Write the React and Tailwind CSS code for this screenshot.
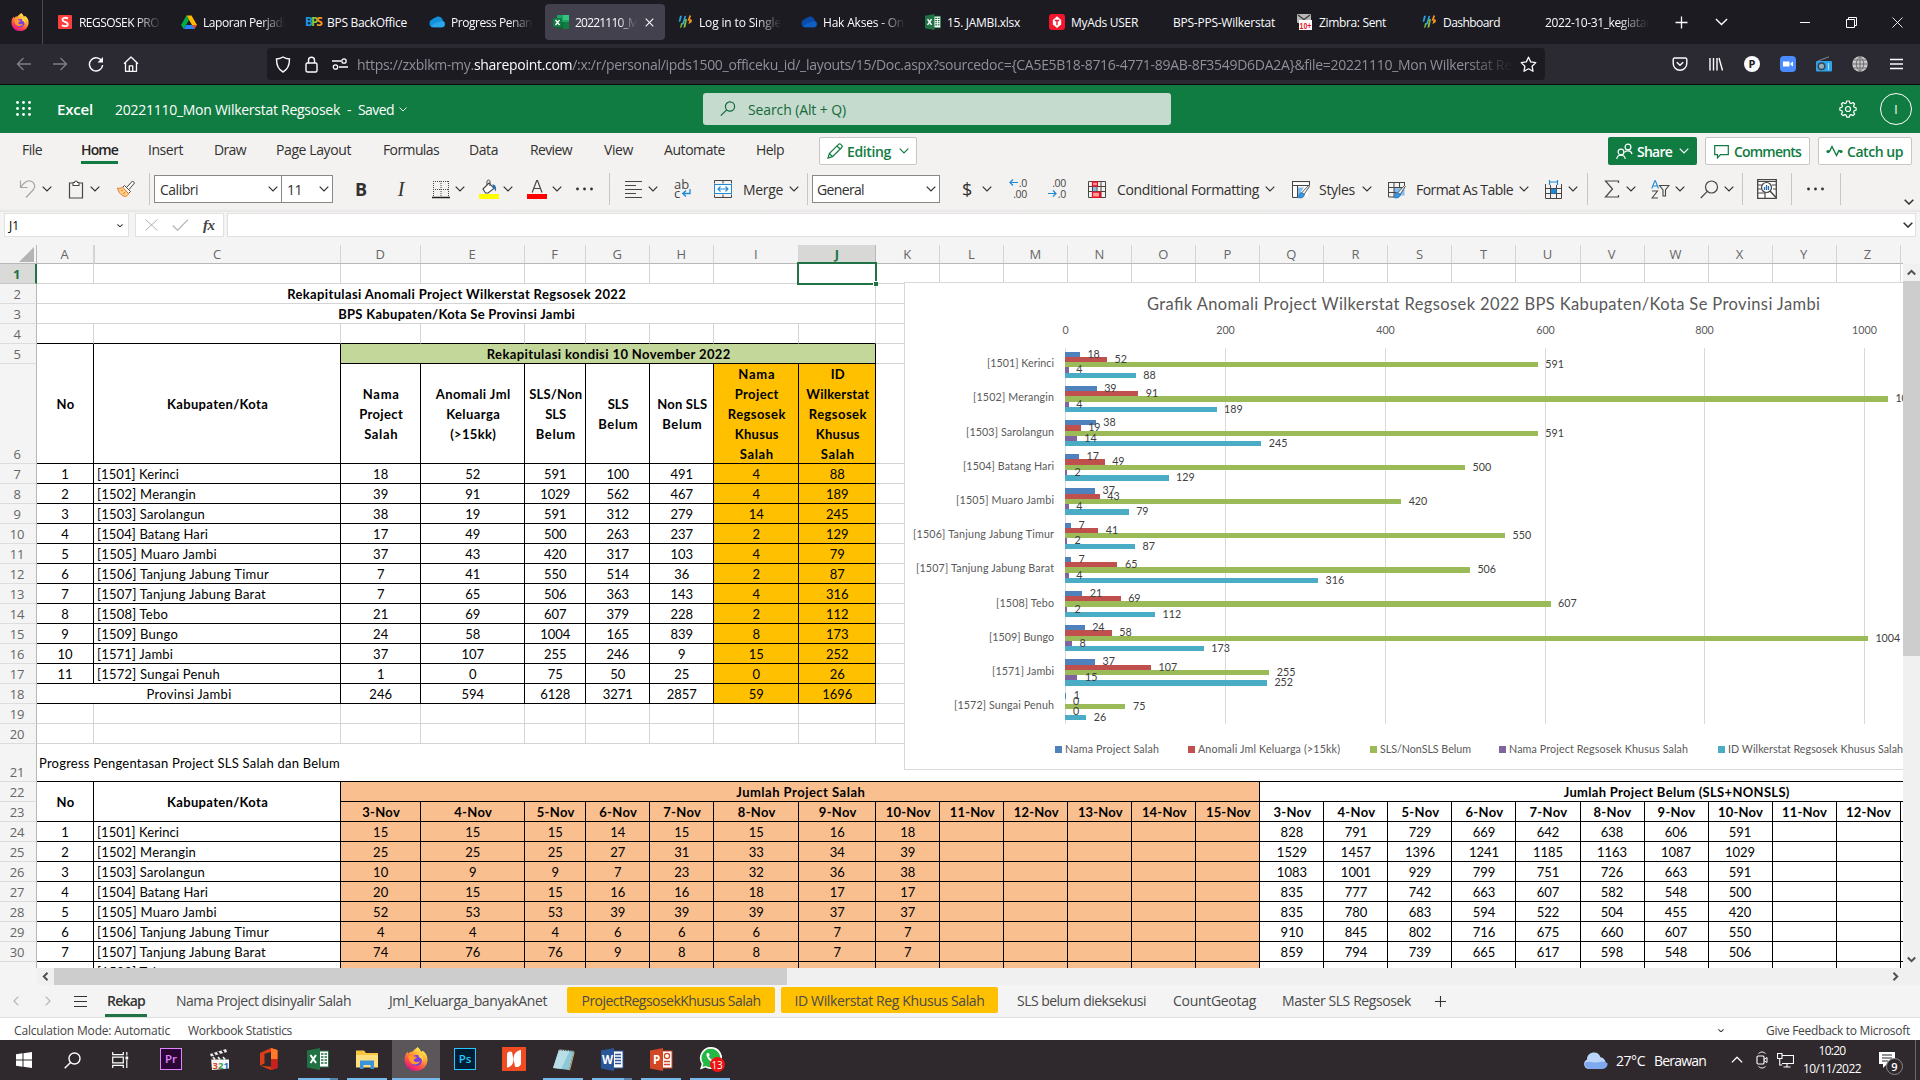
import React, { useLayoutEffect, useRef } from "react";

/* Single-line text whose tracking is adjusted so that it spans exactly w pixels. */
function Fit({ w, className = "", children }) {
  const ref = useRef(null);
  useLayoutEffect(() => {
    const el = ref.current;
    el.style.letterSpacing = "0px";
    const natural = el.getBoundingClientRect().width;
    el.style.letterSpacing = `${(w - natural) / el.textContent.length}px`;
  }, [w, children]);
  return (
    <span ref={ref} className={`inline-block shrink-0 whitespace-pre ${className}`}>
      {children}
    </span>
  );
}

function Svg({ w = 16, h = w, vb, className = "", children }) {
  return (
    <svg width={w} height={h} viewBox={vb || `0 0 ${w} ${h}`} fill="none" className={`block shrink-0 ${className}`}>
      {children}
    </svg>
  );
}

const Chevron = ({ className = "", w = 10, sw = 1.2 }) => (
  <Svg w={w} h={w * 0.6} vb="0 0 10 6" className={className}>
    <path d="M.7.7 5 5 9.300.7" stroke="currentColor" strokeWidth={sw} />
  </Svg>
);

/* ------------------------------------------------------------ app icons */

const FirefoxIcon = ({ s = 18 }) => (
  <Svg w={s} vb="0 0 24 24">
    <defs>
      <linearGradient id={`ff${s}`} x1="18" y1="2" x2="6" y2="22" gradientUnits="userSpaceOnUse">
        <stop offset="0" stopColor="#fff44f" />
        <stop offset=".35" stopColor="#ffa436" />
        <stop offset=".7" stopColor="#ff4f45" />
        <stop offset="1" stopColor="#e31587" />
      </linearGradient>
    </defs>
    <path d="M13.500 0c2 1.500 3 3 3.400 4.500 1 .2 1.400-.2 1.700-.8C22 6 23.500 9 23.500 12.500 23.500 19 18.500 24 12 24S.5 19 .5 12.500C.5 9 2 6.500 3.500 4.500c0 1 .3 1.500.8 2C5.500 5 7 4.500 8.500 4.800 10 2.500 12 1.800 13.500 0z" fill={`url(#ff${s})`} />
    <circle cx="12.300" cy="13.500" r="5.600" fill="#7a3fe0" />
    <path d="M4.500 9c2-1.500 4-1 5.500.5 1.600.1 2.600.3 3 1.200-1.200.9-2.800 1-3.300 2.500.8 2 3.800 2.300 6.300 1-1 3-6.500 5-9.500 1C5 13.500 4 11.500 4.500 9z" fill="#ff9a2e" />
    <path d="M14 6c4 1 6 4.500 5 9-1-3-2.500-4.500-4.500-5 1-1.500.8-2.800-.5-4z" fill="#ffd43e" />
  </Svg>
);

const RedSIcon = () => (
  <Svg>
    <rect x="1" y="1" width="14" height="14" rx="1" fill="#ff3d3d" />
    <path d="M11 4.500C9 3.300 5.500 3.400 5.500 5.700c0 2.600 5.300 1.700 5.300 4.500 0 2.400-3.800 2.500-6 1.100" stroke="#fff" strokeWidth="1.800" />
  </Svg>
);

const DriveIcon = () => (
  <Svg>
    <path d="M5.500 1.500h5L16 11h-5z" fill="#ffba00" />
    <path d="M5.500 1.500 8 6 2.700 15 0 11z" fill="#00ac47" />
    <path d="M5.300 11H16l-2.700 4H2.700z" fill="#2684fc" />
    <path d="M11 11h5l-2.700 4z" fill="#ea4335" />
  </Svg>
);

const BpsTextIcon = () => (
  <span className="flex w-[16px] shrink-0 font-['Open_Sans'] text-[12px] font-bold leading-4 tracking-[-2.200px]">
    <span className="text-[#1c9ae0]">B</span>
    <span className="text-[#8cc63f]">P</span>
    <span className="text-[#f39a1e]">S</span>
  </span>
);

const CloudIcon = ({ a = "#1490df", b = "#28a8ea" }) => (
  <Svg>
    <path d="M6.500 3.500A4.600 4.600 0 0 1 14 7a3.200 3.200 0 0 1-.6 6.200H4A3.900 3.900 0 0 1 3.200 5.600 4.500 4.500 0 0 1 6.500 3.500z" fill={a} />
    <path d="M5.500 9.500 13 7a3.200 3.200 0 0 1 .4 6.200H4a3.500 3.500 0 0 1-2-.8z" fill={b} />
  </Svg>
);

const ExcelNewIcon = () => (
  <Svg>
    <rect x="4" y="1" width="12" height="14" rx="1" fill="#21a366" />
    <path d="M10 1h6v5h-6z" fill="#33c481" />
    <path d="M4 8h6v7H4z" fill="#185c37" />
    <path d="M10 8h6v7h-6z" fill="#107c41" />
    <rect y="4" width="9" height="9" rx="1" fill="#107c41" />
    <path d="m2.500 6 4 5m0-5-4 5" stroke="#fff" strokeWidth="1.300" />
  </Svg>
);

const OldExcel = ({ s = 16 }) => (
  <Svg w={s} vb="0 0 22 22">
    <rect x="12" y="3" width="9.500" height="16" fill="#fff" stroke="#207245" strokeWidth="1" />
    <path d="M14 6h2.500M14 9h2.500M14 12h2.500M14 15h2.500M17.500 6H20M17.500 9H20M17.500 12H20M17.500 15H20" stroke="#207245" strokeWidth="1.600" />
    <path d="M0 2.500 13 0v22L0 19.500z" fill="#207245" />
    <path d="m3.500 7 5.500 8M9 7l-5.500 8" stroke="#fff" strokeWidth="2" />
  </Svg>
);

const BpsLogo = () => (
  <Svg>
    <path d="M3 2 1.500 8l2-.8L5 1.500z" fill="#2aa4e0" />
    <path d="m7.500 2-2.800 9 2-.7 2.500-8.500z" fill="#2aa4e0" />
    <path d="m8 5-1.600 9 2.200-1L10 5z" fill="#7ab648" />
    <path d="m12.500 1-2 6 2-.6L14 2z" fill="#f7941d" />
    <path d="M13.500 5c2 .5 2 3 0 4l-2 1 1-4z" fill="#f7941d" />
    <path d="m4 9-1 5 1.600-.8.900-4z" fill="#7ab648" />
  </Svg>
);

const MyAdsIcon = () => (
  <Svg>
    <rect width="16" height="16" rx="3" fill="#f5142d" />
    <path d="M8 2.200 12.200 6v4.500L8 14l-4.200-3.500V6z" fill="#fff" />
    <path d="M5.800 6.500h4.400M8 6.500v4.700" stroke="#f5142d" strokeWidth="1.400" />
  </Svg>
);

const ZimbraIcon = () => (
  <Svg>
    <rect width="14" height="9" rx="1" fill="#b7b7b7" />
    <path d="m1 1 6 4.500L13 1" stroke="#444" strokeWidth="1.400" />
    <rect x="2" y="6" width="13" height="10" fill="#fff" />
    <text x="2.500" y="14.500" fontSize="9.500" fontWeight="700" fill="#e01b1b" fontFamily="Liberation Sans, sans-serif" textLength="12" lengthAdjust="spacingAndGlyphs">10+</text>
  </Svg>
);

/* ------------------------------------------------------------ browser */

const TABS = [
  { icon: <RedSIcon />, text: "REGSOSEK PRO", w: 80, fade: true },
  { icon: <DriveIcon />, text: "Laporan Perjadi", w: 82, fade: true },
  { icon: <BpsTextIcon />, text: "BPS BackOffice", w: 80 },
  { icon: <CloudIcon />, text: "Progress Penan", w: 81, fade: true },
  { icon: <ExcelNewIcon />, text: "20221110_M", w: 63, active: true },
  { icon: <BpsLogo />, text: "Log in to Single", w: 82, fade: true },
  { icon: <CloudIcon a="#0a4ba8" b="#0f5fc4" />, text: "Hak Akses - On", w: 81, fade: true },
  { icon: <OldExcel />, text: "15. JAMBI.xlsx", w: 73 },
  { icon: <MyAdsIcon />, text: "MyAds USER", w: 67 },
  { text: "BPS-PPS-Wilkerstat", w: 102 },
  { icon: <ZimbraIcon />, text: "Zimbra: Sent", w: 67 },
  { icon: <BpsLogo />, text: "Dashboard", w: 57 },
  { text: "2022-10-31_kegiatan", w: 108, fade: true },
];

function TabStrip() {
  return (
    <div className="flex h-[44px] shrink-0 items-center bg-[#1c1b22] text-[#fbfbfe]">
      <div className="flex h-full w-[43px] shrink-0 items-center border-r border-[#4a4a52] pl-[11px]">
        <FirefoxIcon />
      </div>
      <div className="ml-[6px] flex gap-1">
        {TABS.map((t) => (
          <div
            key={t.text}
            className={`flex h-[36px] w-[120px] shrink-0 items-center overflow-hidden rounded pl-2 ${t.active ? "bg-[#42414d]" : ""}`}
          >
            {t.icon && <span className="mr-[6px] flex w-4 shrink-0">{t.icon}</span>}
            <span
              className={`h-5 overflow-hidden text-[12px] leading-[21px] ${
                t.fade || t.active ? "[mask-image:linear-gradient(to_right,#000_70%,transparent)]" : ""
              } ${t.active ? "w-[62px]" : t.icon ? "w-[82px]" : "w-[104px]"}`}
            >
              <Fit w={t.w}>{t.text}</Fit>
            </span>
            {t.active && (
              <Svg w={9} className="ml-[8px]">
                <path d="m.7.7 7.600 7.600m0-7.600L.7 8.300" stroke="#fbfbfe" strokeWidth="1.100" />
              </Svg>
            )}
          </div>
        ))}
      </div>
      <Svg w={13} className="ml-[18px]">
        <path d="M6.500.5v12M.5 6.500h12" stroke="currentColor" strokeWidth="1.300" />
      </Svg>
      <Chevron w={13} sw={1.100} className="ml-[27px]" />
      <div className="ml-auto flex items-center">
        <Svg w={10}><path d="M0 5.500h10" stroke="currentColor" /></Svg>
        <Svg w={11} className="ml-[36px]">
          <path d="M.5 2.500h8v8h-8zM2.500 2.500v-2h8v8h-2" stroke="currentColor" />
        </Svg>
        <Svg w={11} className="mr-[17px] ml-[35px]">
          <path d="m.5.5 10 10m0-10-10 10" stroke="currentColor" strokeWidth=".9" />
        </Svg>
      </div>
    </div>
  );
}

function NavBar() {
  return (
    <div className="flex h-[41px] shrink-0 items-center border-b border-[#0c0c0d] bg-[#2b2a33] text-[#fbfbfe]">
      <Svg w={16} className="ml-[16px] opacity-40">
        <path d="M15 8H1.500M7.500 2l-6 6 6 6" stroke="currentColor" strokeWidth="1.300" />
      </Svg>
      <Svg w={16} className="ml-[20px] opacity-40">
        <path d="M1 8h13.500M8.500 2l6 6-6 6" stroke="currentColor" strokeWidth="1.300" />
      </Svg>
      <Svg w={16} className="ml-[20px]">
        <path d="M14 5.500A6.600 6.600 0 1 0 14.600 9" stroke="currentColor" strokeWidth="1.400" />
        <path d="M15 1v5.500H9.500z" fill="currentColor" />
      </Svg>
      <Svg w={16} className="ml-[19px]">
        <path d="M1 7.800 8 1l7 6.800M2.500 6.500v8.800h11V6.500M6.300 15V9.800h3.400V15" stroke="currentColor" strokeWidth="1.300" strokeLinejoin="round" />
      </Svg>
      <div className="ml-[128px] flex h-8 w-[1278px] items-center rounded bg-[#1c1b22]">
        <Svg w={16} h={17} className="ml-[8px]">
          <path d="M8 1c2 1.200 4.300 1.800 6.500 2C14.500 9 13 13.500 8 16 3 13.500 1.500 9 1.500 3 3.700 2.800 6 2.200 8 1z" stroke="currentColor" strokeWidth="1.400" />
        </Svg>
        <Svg w={13} h={17} className="ml-[14px]">
          <rect x="1" y="7" width="11" height="9" rx="1.500" stroke="currentColor" strokeWidth="1.400" />
          <path d="M3.500 7V4.200a3 3 0 0 1 6 0V7" stroke="currentColor" strokeWidth="1.400" />
        </Svg>
        <Svg w={16} h={12} className="ml-[14px]">
          <path d="M0 3h9M7 9h9" stroke="currentColor" strokeWidth="1.300" />
          <circle cx="12" cy="3" r="2.200" stroke="currentColor" strokeWidth="1.300" />
          <circle cx="3.500" cy="9" r="2.200" stroke="currentColor" strokeWidth="1.300" />
        </Svg>
        <div className="ml-[9px] h-8 w-[1156px] overflow-hidden pt-px text-[14px] leading-8 text-[#8f8f9a] [mask-image:linear-gradient(to_right,#000_96%,transparent)]">
          <Fit w={1162}>
            https://zxblkm-my.<span className="text-[#fbfbfe]">sharepoint.com</span>
            /:x:/r/personal/ipds1500_officeku_id/_layouts/15/Doc.aspx?sourcedoc={"{"}CA5E5B18-8716-4771-89AB-8F3549D6DA2A{"}"}&amp;file=20221110_Mon Wilkerstat Reg
          </Fit>
        </div>
        <Svg w={17} className="ml-[7px]">
          <path d="m8.500 1.200 2.200 4.700 5.100.7-3.700 3.600.9 5.100-4.500-2.500L4 15.300l.9-5.100L1.200 6.600l5.100-.7z" stroke="currentColor" strokeWidth="1.300" strokeLinejoin="round" />
        </Svg>
      </div>
      <div className="ml-[127px] flex items-center gap-[20px]">
        <Svg>
          <path d="M2.500 2h11a1.300 1.300 0 0 1 1.300 1.300V7.500a6.800 6.800 0 0 1-13.600 0V3.300A1.300 1.300 0 0 1 2.500 2z" stroke="currentColor" strokeWidth="1.400" />
          <path d="m4.800 6.300 3.200 3 3.200-3" stroke="currentColor" strokeWidth="1.500" />
        </Svg>
        <Svg>
          <path d="M2 2v12.500M5.500 2v12.500M9 2v12.500M11 2l3.500 12.500" stroke="currentColor" strokeWidth="1.400" />
        </Svg>
        <span className="flex size-4 items-center justify-center rounded-full bg-[#fbfbfe] text-[11px] font-bold text-[#1c1b22]">P</span>
        <Svg>
          <rect width="16" height="16" rx="4" fill="#4a8cff" />
          <path d="M3 5.500h6.500v5H3zM10.500 7.300 13 5.500v5l-2.500-1.800z" fill="#fff" />
        </Svg>
        <Svg>
          <path d="M2 5 13 .8" stroke="#6f7f8c" strokeWidth="1.200" />
          <rect y="5" width="16" height="10.500" rx="1" fill="#2ea3ea" />
          <circle cx="5.500" cy="10.300" r="4" fill="#3c4450" />
          <circle cx="5.500" cy="10.300" r="2.500" fill="#8fb0c4" />
          <path d="M12.500 7v7" stroke="#a9dcf7" strokeWidth="1.200" />
        </Svg>
        <Svg>
          <circle cx="8" cy="8" r="7.700" fill="#c9c9c9" />
          <path d="M8 0v16M0 8h16M2 4h12M2 12h12M8 .5c-5 4.500-5 10.500 0 15M8 .5c5 4.500 5 10.500 0 15" stroke="#5b5b60" strokeWidth=".8" />
        </Svg>
        <Svg>
          <path d="M2 3.500h13M2 8h13M2 12.500h13" stroke="currentColor" strokeWidth="1.300" />
        </Svg>
      </div>
    </div>
  );
}

/* ------------------------------------------------------------ Excel header and ribbon */

function ExcelHeader() {
  return (
    <div className="flex h-[48px] shrink-0 items-center bg-[#107c41] text-white">
      <Svg w={16} className="ml-[16px]">
        {[1.5, 7.500, 13.500].map((y) => [1.5, 7.500, 13.500].map((x) => <circle key={`${x}-${y}`} cx={x} cy={y} r="1.400" fill="#fff" />))}
      </Svg>
      <div className="ml-[25px] w-[58px] pt-px text-[15px] leading-[47px] font-semibold"><Fit w={36}>Excel</Fit></div>
      <div className="flex w-[588px] items-center pt-px text-[14px]">
        <Fit w={225}>20221110_Mon Wilkerstat Regsosek</Fit>
        <span className="ml-[7px] w-[11px]">-</span>
        <Fit w={36}>Saved</Fit>
        <Chevron w={8} sw={1.200} className="ml-[5px]" />
      </div>
      <div className="flex h-8 w-[468px] items-center rounded-[3px] bg-[#c5dbcd] text-[14px] text-[#14683a]">
        <Svg w={16} className="ml-[17px] ">
          <circle cx="10" cy="5.500" r="4.600" stroke="currentColor" strokeWidth="1.200" />
          <path d="M6.700 8.800.8 14.700" stroke="currentColor" strokeWidth="1.200" />
        </Svg>
        <Fit w={98} className="ml-[12px] pt-px">Search (Alt + Q)</Fit>
      </div>
      <Svg w={18} className="ml-auto">
        <path
          d="M7.700 1h2.600l.5 2 1.300.600L14 2.500 15.600 4l-1 1.900.5 1.300 2 .6v2.400l-2 .6-.5 1.300 1 1.900-1.600 1.600-1.900-1-1.300.5-.5 2H7.700l-.5-2-1.300-.5-1.900 1L2.400 14l1-1.900-.5-1.300-2-.6V7.800l2-.6.500-1.300-1-1.900L4 2.500l1.900 1.100L7.200 3z"
          stroke="currentColor" strokeWidth="1.200" strokeLinejoin="round"
        />
        <circle cx="9" cy="9" r="2.500" stroke="currentColor" strokeWidth="1.200" />
      </Svg>
      <div className="mr-2 ml-[23px] flex size-8 items-center justify-center rounded-full border border-white pt-px text-[12px]">I</div>
    </div>
  );
}

const MENU = [
  ["File", 20, "ml-[22px]"],
  ["Home", 37, "ml-[39px]", true],
  ["Insert", 35, "ml-[30px]"],
  ["Draw", 32, "ml-[31px]"],
  ["Page Layout", 75, "ml-[30px]"],
  ["Formulas", 56, "ml-[32px]"],
  ["Data", 29, "ml-[30px]"],
  ["Review", 42, "ml-[32px]"],
  ["View", 29, "ml-[32px]"],
  ["Automate", 61, "ml-[31px]"],
  ["Help", 28, "ml-[31px]"],
];

function MenuRow() {
  return (
    <div className="flex h-[38px] shrink-0 items-start text-[14px] text-[#323130]">
      {MENU.map(([t, w, ml, on]) => (
        <div key={t} className={`${ml} h-[31px] shrink-0 border-b-[3px] leading-[33px] ${on ? "border-[#107c41] font-semibold text-[#252423]" : "border-transparent"}`}>
          <Fit w={w}>{t}</Fit>
        </div>
      ))}
      <div className="mt-[4px] ml-[35px] flex h-7 w-[98px] shrink-0 items-center rounded-[2px] border border-[#c8c6c4] bg-white text-[#107c41]">
        <Svg w={16} className="ml-[7px]">
          <path d="m1 15 1.300-4.500L11.500 1.300a1.500 1.500 0 0 1 2.200 0l1 1a1.500 1.500 0 0 1 0 2.200L5.500 13.700zM10 3l3 3M2.300 10.500l3.200 3.200" stroke="currentColor" strokeWidth="1.200" />
        </Svg>
        <Fit w={44} className="ml-[4px] pt-px font-semibold">Editing</Fit>
        <Chevron className="ml-[8px]" />
      </div>
      <div className="mt-[4px] mr-2 ml-auto flex gap-2 font-semibold text-[#107c41]">
        <div className="flex h-7 w-[89px] items-center rounded-[2px] bg-[#107c41] text-white">
          <Svg w={17} className="ml-[8px]">
            <circle cx="12" cy="4" r="2.900" stroke="currentColor" strokeWidth="1.200" />
            <path d="M8.500 9.500C9.500 7.500 15 6.500 16 11" stroke="currentColor" strokeWidth="1.200" />
            <circle cx="5" cy="9" r="2.900" stroke="currentColor" strokeWidth="1.200" />
            <path d="M.8 16c.3-5 8-5 8.400 0" stroke="currentColor" strokeWidth="1.200" />
          </Svg>
          <Fit w={35} className="ml-[4px] pt-px">Share</Fit>
          <Chevron className="ml-[7px]" />
        </div>
        <div className="flex h-7 w-[105px] items-center rounded-[2px] border border-[#c8c6c4] bg-white">
          <Svg w={15} className="ml-[8px]">
            <path d="M.7 1.700h13.600v9H6.500l-3 3.200v-3.200H.7z" stroke="currentColor" strokeWidth="1.200" />
          </Svg>
          <Fit w={67} className="ml-[5px] pt-px">Comments</Fit>
        </div>
        <div className="flex h-7 w-[94px] items-center rounded-[2px] border border-[#c8c6c4] bg-white">
          <Svg w={17} h={14} className="ml-[7px]">
            <path d="M1.500 7.500h2L6 2.500l4.500 9 2.500-5 2 1" stroke="currentColor" strokeWidth="1.400" />
            <circle cx="2" cy="7.500" r="1.600" fill="currentColor" />
            <circle cx="15" cy="7.500" r="1.600" fill="currentColor" />
          </Svg>
          <Fit w={56} className="ml-[4px] pt-px">Catch up</Fit>
        </div>
      </div>
    </div>
  );
}

const Sep = ({ className }) => <span className={`${className} h-8 w-px shrink-0 bg-[#c8c6c4]`} />;

const Dots = ({ className }) => (
  <Svg w={19} h={4} className={className}>
    <circle cx="2.500" cy="2" r="1.400" fill="#323130" />
    <circle cx="9.500" cy="2" r="1.400" fill="#323130" />
    <circle cx="16.500" cy="2" r="1.400" fill="#323130" />
  </Svg>
);

const TableGlyph = () => (
  <path d="M1.500 2.500h16M1.500 7.500h16M1.500 12.500h8M1.500 2v15M7 2v15M12.500 2v5M17.500 2v4M1.500 17H7" stroke="#484644" />
);

const BrushGlyph = () => (
  <>
    <path d="M17.500 5.500 11 12.500l2 2 5.300-8z" fill="#fff" stroke="#484644" strokeWidth=".9" />
    <path d="M10.500 12.500c-3 .5-1.500 3.500-4 4.800 3 1.400 7 .3 6.800-2.800z" fill="#3a96dd" stroke="#1e6fb8" strokeWidth=".8" />
  </>
);

function ToolRow() {
  return (
    <div className="flex h-[38px] shrink-0 items-center pb-[2px] text-[14px] text-[#323130]">
      <Svg w={18} h={20} className="ml-[18px] text-[#a8a6a4]">
        <path d="M2.500 1.500v7h7M3 8C6 3.500 9 1.700 12 2c4 .4 6 5 3.500 8.500L8 18.500" stroke="currentColor" strokeWidth="1.200" />
      </Svg>
      <Chevron className="ml-[6px]" />
      <Svg w={16} h={19} className="ml-[16px]">
        <path d="M4.500 3H1.500v15h13V3h-3" stroke="#484644" strokeWidth="1.200" />
        <path d="M5 5.500V2.500h1.500C6.700.5 9.300.5 9.500 2.500H11v3z" fill="#fff" stroke="#484644" strokeWidth="1.100" />
      </Svg>
      <Chevron className="ml-[6px]" />
      <Svg w={20} className="ml-[16px]">
        <path d="m8.500 6.500 6 6-2 2-6-6z" fill="#fff" stroke="#484644" />
        <path d="m11 8 5.500-6 2 2-5.500 6.500" fill="#fff" stroke="#484644" />
        <path d="M6.500 8C5 9.500 3 9.500 1.500 9c1 4 3.500 8 8 8.500 1.500-.5 2.500-1.500 3-3z" fill="#fbd28b" stroke="#e8762c" />
        <path d="m5 12 2-1m0 4 2.500-2" stroke="#e8762c" />
      </Svg>
      <Sep className="ml-[13px]" />
      <div className="ml-[4px] flex h-7 w-[128px] shrink-0 items-center border border-[#8a8886] bg-white pl-[5px]">
        <Fit w={38}>Calibri</Fit>
        <Chevron className="mr-[3px] ml-auto" />
      </div>
      <div className="ml-[-1px] flex h-7 w-[52px] shrink-0 items-center border border-[#8a8886] bg-white pl-[5px]">
        <Fit w={15}>11</Fit>
        <Chevron className="mr-[3px] ml-auto" />
      </div>
      <span className="ml-[20px] w-4 text-center text-[18px] leading-5 font-bold">B</span>
      <span className="ml-[24px] w-4 text-center font-['Liberation_Serif'] text-[20px] leading-5 italic">I</span>
      <Svg w={18} h={19} className="ml-[23px]">
        <path d="M1 1.500h16M1 9.500h16M1.500 1v16M9 1v16M16.500 1v16" stroke="#484644" strokeDasharray="1 1" />
        <path d="M0 17.500h18" stroke="#201f1e" strokeWidth="1.500" />
      </Svg>
      <Chevron className="ml-[5px]" />
      <Svg w={20} h={20} className="ml-[14px]">
        <path d="m4 10 6-6 5 5.500-6 4.500H6.500z" stroke="#484644" strokeWidth="1.100" fill="#fff" />
        <path d="M8 6V2.500c0-2 3-2 3 0V7" stroke="#484644" />
        <path d="M13.500 5.500c3 0 4 2.500 3.500 7-1.500-1-1.300-4-3.500-5z" fill="#1e6fb8" />
        <rect y="15" width="20" height="5" fill="#ffff00" />
      </Svg>
      <Chevron className="ml-[4px]" />
      <Svg w={20} h={20} className="ml-[14px]">
        <path d="M5.200 13.500 9.700 1.500h.8l4.500 12M6.800 9.500h6.600" stroke="#484644" strokeWidth="1.200" />
        <rect y="15" width="20" height="5" fill="#ff0000" />
      </Svg>
      <Chevron className="ml-[5px]" />
      <Dots className="ml-[13px]" />
      <Sep className="ml-[15px]" />
      <Svg w={17} h={17} className="ml-[15px]">
        <path d="M0 .5h17M0 4.500h11M0 8.500h17M0 12.500h11M0 16.500h17" stroke="#484644" />
      </Svg>
      <Chevron className="ml-[6px]" />
      <div className="ml-[16px] flex w-[19px] shrink-0 flex-col text-[13px] leading-[9px] text-[#484644]">
        <span>ab</span>
        <span className="flex items-end">c
          <Svg w={10} h={9} className="ml-px">
            <path d="M9 0v4.500H2M5 1.500l-3.300 3L5 7.500" stroke="#1e8ad6" strokeWidth="1.300" />
          </Svg>
        </span>
      </div>
      <Svg w={18} h={18} className="ml-[21px]">
        <path d="M.5 3.500V.5h17v3M9 .5v3M.5 14.500v3h17v-3M9 14.500v3" stroke="#484644" />
        <path d="M.5 4.500h17v9H.5z" fill="#fff" stroke="#1e8ad6" strokeWidth="1.100" />
        <path d="M4 9h10M6.500 6.500 4 9l2.500 2.500M11.500 6.500 14 9l-2.500 2.500" stroke="#1e8ad6" strokeWidth="1.100" />
      </Svg>
      <Fit w={40} className="ml-[11px] pt-px">Merge</Fit>
      <Chevron className="ml-[6px]" />
      <Sep className="ml-[8px]" />
      <div className="ml-[4px] flex h-7 w-[128px] shrink-0 items-center border border-[#8a8886] bg-white pl-[4px]">
        <Fit w={47} className="pt-px">General</Fit>
        <Chevron className="mr-[3px] ml-auto" />
      </div>
      <span className="ml-[22px] w-[10px] text-[18px] leading-6">$</span>
      <Chevron className="ml-[10px]" />
      <div className="ml-[15px] flex w-[20px] shrink-0 flex-col items-end text-[10.500px] leading-[11px] tracking-[-0.300px] text-[#484644]">
        <span className="flex">
          <Svg w={9} h={9} className="mr-[1px]"><path d="M9 4.500H1M4 1.500l-3 3 3 3" stroke="#1e8ad6" strokeWidth="1.200" /></Svg>
          .0
        </span>
        <span>.00</span>
      </div>
      <div className="ml-[19px] flex w-[20px] shrink-0 flex-col items-end text-[10.500px] leading-[11px] tracking-[-0.300px] text-[#484644]">
        <span>.00</span>
        <span className="flex">
          <Svg w={9} h={9} className="mr-[1px]"><path d="M0 4.500h8M5 1.500l3 3-3 3" stroke="#1e8ad6" strokeWidth="1.200" /></Svg>
          .0
        </span>
      </div>
      <Svg w={18} h={17} className="ml-[22px]">
        <path d="M4.500 1h5v4h-5zM4.500 11h7v5h-7z" fill="#ff9c9c" stroke="#e81123" />
        <path d="M4.500 6h4v4h-4z" fill="#83bdee" />
        <path d="M.5.5h17v16H.5zM.5 5.500h17M.5 10.500h17M4.500.5v16M13 .5v16M9 5v6" stroke="#484644" />
        <path d="M4.500.8h5v4.400h-5zM4.500 11h8v5.500h-8z" stroke="#e81123" strokeWidth="1.200" />
      </Svg>
      <Fit w={142} className="ml-[11px] pt-px">Conditional Formatting</Fit>
      <Chevron className="ml-[6px]" />
      <Svg w={19} h={19} className="ml-[16px]">
        <path d="M2 3h15v13.500H2z" fill="#fff" />
        <path d="M7 7.500h6l-4 5.500-2 4.500z" fill="#83bdee" />
        <path d="M1.500 1.500h17M1.500 5.500h17M1.500 1v16.500H7M6.500 5v12.500M18.500 1v4.500" stroke="#484644" />
        <BrushGlyph />
      </Svg>
      <Fit w={36} className="ml-[9px] pt-px">Styles</Fit>
      <Chevron className="ml-[7px]" />
      <Svg w={19} h={19} className="ml-[15px]">
        <path d="M7 7.500h10.500v8H7z" fill="#83bdee" />
        <TableGlyph />
        <BrushGlyph />
      </Svg>
      <Fit w={97} className="ml-[10px] pt-px">Format As Table</Fit>
      <Chevron className="ml-[6px]" />
      <Svg w={19} h={19} className="ml-[15px]">
        <path d="M1.500 4v14.500h16V4M1.500 8.500h16M1.500 13.500h16M6.500 5v13.500M12.500 5v13.500" stroke="#484644" />
        <path d="M7 9h5.500v4.500H7z" fill="#1e8ad6" />
        <path d="M5.500 0v5M13.500 0v5M5.500 2h8" stroke="#1e8ad6" strokeWidth="1.200" />
      </Svg>
      <Chevron className="ml-[5px]" />
      <Sep className="ml-[9px]" />
      <Svg w={16} h={18} className="ml-[16px]">
        <path d="M14.500 3V1H1.500l7 8-7 8h13v-2" stroke="#484644" strokeWidth="1.200" />
      </Svg>
      <Chevron className="ml-[6px]" />
      <Svg w={19} h={19} className="ml-[15px]">
        <path d="M.8 8.500 3.800.8h.6l3 7.700M2 6h4.300" stroke="#1e8ad6" strokeWidth="1.100" />
        <path d="M1 11h5.500L1 18h6" stroke="#484644" strokeWidth="1.100" />
        <path d="M8.500 5.500h9.500l-3.500 4.500v6h-2.500v-6z" stroke="#484644" strokeWidth="1.100" />
      </Svg>
      <Chevron className="ml-[5px]" />
      <Svg w={19} h={19} className="ml-[15px]">
        <circle cx="11.500" cy="7" r="6" stroke="#484644" strokeWidth="1.200" />
        <path d="M7.300 11.300.8 18" stroke="#484644" strokeWidth="1.200" />
      </Svg>
      <Chevron className="ml-[5px]" />
      <Sep className="ml-[8px]" />
      <Svg w={20} h={20} className="ml-[14px]">
        <path d="M.7.7h18.600v18.600H.7z" fill="#fff" stroke="#484644" strokeWidth="1.300" />
        <path d="M.7 2.500h18.600M.7 6h4M15 6h4M.7 10H4M.7 14h7M8 14v5M16 10h3" stroke="#484644" strokeWidth="1.200" />
        <circle cx="9.500" cy="8.500" r="5" fill="#fff" stroke="#484644" strokeWidth="1.200" />
        <path d="m13 12 6 6.500" stroke="#484644" strokeWidth="1.500" />
        <path d="M7.500 8v3M9.500 6v5M11.500 7v4" stroke="#1e6fb8" strokeWidth="1.300" />
      </Svg>
      <Sep className="ml-[14px]" />
      <Dots className="ml-[14px]" />
      <Sep className="ml-[15px]" />
      <Chevron sw={1.500} className="mt-[25px] ml-[63px]" />
    </div>
  );
}

function FormulaBar() {
  return (
    <div className="flex h-[33px] shrink-0 items-start bg-[#f4f4f4] pt-px">
      <div className="ml-[4px] flex h-[24px] w-[125px] items-center border border-[#e1e1e1] bg-white pt-px pl-[4px] text-[12px]">
        <Fit w={10}>J1</Fit>
        <Chevron w={6} sw={1.800} className="mr-[5px] ml-auto text-[#444]" />
      </div>
      <div className="ml-[6px] flex h-[24px] w-[89px] items-center border border-[#e1e1e1] bg-white">
        <Svg w={13} h={12} className="ml-[9px]"><path d="m.5.5 12 11m0-11-12 11" stroke="#b3b0ad" /></Svg>
        <Svg w={17} h={12} className="ml-[14px]"><path d="m.7 6.500 4.800 4.700L16 .7" stroke="#b3b0ad" strokeWidth="1.100" /></Svg>
        <span className="ml-[14px] font-['Liberation_Serif'] text-[15px] leading-5 font-bold tracking-[-0.500px] text-[#444] italic">fx</span>
      </div>
      <div className="ml-[3px] flex h-[24px] w-[1689px] items-center border border-[#e1e1e1] bg-white">
        <Chevron sw={1.600} className="mr-[2px] ml-auto text-[#333]" />
      </div>
    </div>
  );
}

/* ------------------------------------------------------------ worksheet */

const COLS = [
  ["A", "w-[57px]"], ["C", "w-[247px]"], ["D", "w-[80px]"], ["E", "w-[104px]"], ["F", "w-[61px]"],
  ["G", "w-[64px]"], ["H", "w-[64px]"], ["I", "w-[85px]"], ["J", "w-[77px]"],
  ..."K L M N O P Q R S T U V W X Y Z AA AB AC".split(" ").map((l) => [l, "w-[64px]"]),
];
const AFTER_J = COLS.length - 9;

const DATA = [
  ["[1501] Kerinci", 18, 52, 591, 100, 491, 4, 88],
  ["[1502] Merangin", 39, 91, 1029, 562, 467, 4, 189],
  ["[1503] Sarolangun", 38, 19, 591, 312, 279, 14, 245],
  ["[1504] Batang Hari", 17, 49, 500, 263, 237, 2, 129],
  ["[1505] Muaro Jambi", 37, 43, 420, 317, 103, 4, 79],
  ["[1506] Tanjung Jabung Timur", 7, 41, 550, 514, 36, 2, 87],
  ["[1507] Tanjung Jabung Barat", 7, 65, 506, 363, 143, 4, 316],
  ["[1508] Tebo", 21, 69, 607, 379, 228, 2, 112],
  ["[1509] Bungo", 24, 58, 1004, 165, 839, 8, 173],
  ["[1571] Jambi", 37, 107, 255, 246, 9, 15, 252],
  ["[1572] Sungai Penuh", 1, 0, 75, 50, 25, 0, 26],
];
/* Widths of the district names in the cells. */
const CELL_W = [82, 99, 108, 111, 120, 172, 169, 71, 81, 76, 123];

const SALAH = [
  [15, 15, 15, 14, 15, 15, 16, 18],
  [25, 25, 25, 27, 31, 33, 34, 39],
  [10, 9, 9, 7, 23, 32, 36, 38],
  [20, 15, 15, 16, 16, 18, 17, 17],
  [52, 53, 53, 39, 39, 39, 37, 37],
  [4, 4, 4, 6, 6, 6, 7, 7],
  [74, 76, 76, 9, 8, 8, 7, 7],
];
const BELUM = [
  [828, 791, 729, 669, 642, 638, 606, 591],
  [1529, 1457, 1396, 1241, 1185, 1163, 1087, 1029],
  [1083, 1001, 929, 799, 751, 726, 663, 591],
  [835, 777, 742, 663, 607, 582, 548, 500],
  [835, 780, 683, 594, 522, 504, 455, 420],
  [910, 845, 802, 716, 675, 660, 607, 550],
  [859, 794, 739, 665, 617, 598, 548, 506],
];
const DATES = Array.from({ length: 13 }, (_, i) => `${i + 3}-Nov`);

const K = "border-black";
const G = "border-[#d4d4d4]";

function Cell({ c = "", r = K, b = K, w, children, ...rest }) {
  return (
    <td {...rest} className={`border-r border-b p-0 text-center leading-[18px] ${r === K ? "border-r-black" : "border-r-[#d4d4d4]"} ${b === K ? "border-b-black" : "border-b-[#d4d4d4]"} ${c}`}>
      {w ? <Fit w={w} className="ml-px">{children}</Fit> : children}
    </td>
  );
}

const Blank = ({ n, b = G }) => Array.from({ length: n }, (_, i) => <Cell key={i} r={G} b={b} />);

function RowHead({ n, on, last }) {
  return (
    <th
      className={`border-b p-0 pr-[2px] align-bottom font-['Open_Sans'] text-[13px] leading-[18px] ${
        on
          ? "border-r-2 border-r-[#217346] border-b-[#c6c6c6] bg-[#dadad8] font-bold text-[#217346]"
          : "border-r border-r-[#b8b8b8] border-b-[#dcdcdc] bg-[#f4f4f4] font-normal text-[#666]"
      }`}
    >
      {!last && <span className="tracking-[-0.300px]">{n}</span>}
    </th>
  );
}

function Sheet() {
  return (
    <table className="w-[2093px] table-fixed border-separate border-spacing-0 font-[Lato] text-[13px] text-black">
      <colgroup>
        <col className="w-[37px]" />
        {COLS.map(([l, w]) => <col key={l} className={w} />)}
      </colgroup>
      <thead>
        <tr className="h-[19px]">
          <th className="border-r border-b border-[#b8b8b8] bg-[#f4f4f4] p-0">
            <Svg w={15} h={15} className="ml-[19px]"><path d="M15 0v15H0z" fill="#b4b4b4" /></Svg>
          </th>
          {COLS.map(([l]) => (
            <th
              key={l}
              className={`border-r border-b p-0 pr-px pb-px font-['Open_Sans'] text-[13px] leading-[16px] ${
                l === "J"
                  ? "border-r-[#b8b8b8] border-b-[#217346] bg-[#d8d8d6] font-bold text-[#217346]"
                  : "border-r-[#d4d4d4] border-b-[#b8b8b8] bg-[#f4f4f4] font-normal text-[#666]"
              } ${l === "C" ? "border-l border-l-[#d4d4d4]" : ""}`}
            >
              {l}
            </th>
          ))}
        </tr>
      </thead>
      <tbody>
        <tr className="h-5"><RowHead n={1} on /><Blank n={COLS.length} /></tr>
        <tr className="h-5 font-bold">
          <RowHead n={2} />
          <Cell colSpan={9} r={G} b={G} w={339}>Rekapitulasi Anomali Project Wilkerstat Regsosek 2022</Cell>
          <Blank n={AFTER_J} />
        </tr>
        <tr className="h-5 font-bold">
          <RowHead n={3} />
          <Cell colSpan={9} r={G} b={G} w={237}>BPS Kabupaten/Kota Se Provinsi Jambi</Cell>
          <Blank n={AFTER_J} />
        </tr>
        <tr className="h-5"><RowHead n={4} /><Blank n={9} b={K} /><Blank n={AFTER_J} /></tr>
        <tr className="h-5 font-bold">
          <RowHead n={5} />
          <Cell rowSpan={2} w={18}>No</Cell>
          <Cell rowSpan={2} w={101}>Kabupaten/Kota</Cell>
          <Cell colSpan={7} c="bg-[#c4d79b]" w={244}>Rekapitulasi kondisi 10 November 2022</Cell>
          <Blank n={AFTER_J} />
        </tr>
        <tr className="h-[100px] font-bold">
          <RowHead n={6} />
          {[
            [["Nama", 37], ["Project", 44], ["Salah", 34]],
            [["Anomali Jml", 75], ["Keluarga", 54], ["(>15kk)", 46]],
            [["SLS/Non", 53], ["SLS", 21], ["Belum", 40]],
            [["SLS", 21], ["Belum", 40]],
            [["Non SLS", 50], ["Belum", 40]],
            [["Nama", 37], ["Project", 44], ["Regsosek", 58], ["Khusus", 44], ["Salah", 34]],
            [["ID", 14], ["Wilkerstat", 63], ["Regsosek", 58], ["Khusus", 44], ["Salah", 34]],
          ].map((lines, i) => (
            <Cell key={i} c={i > 4 ? "bg-[#ffc000]" : ""}>
              <div className="-mb-px flex flex-col">
                {lines.map(([t, w]) => <span key={t} className="h-5 leading-[20px]"><Fit w={w} className="ml-px">{t}</Fit></span>)}
              </div>
            </Cell>
          ))}
          <Blank n={AFTER_J} />
        </tr>
        {DATA.map(([name, ...v], i) => (
          <tr key={name} className="h-5">
            <RowHead n={7 + i} />
            <Cell>{i + 1}</Cell>
            <Cell c="pl-[2px] text-left!" w={CELL_W[i]}>{name}</Cell>
            {v.map((x, j) => <Cell key={j} c={j > 4 ? "bg-[#ffc000]" : ""}>{x}</Cell>)}
            <Blank n={AFTER_J} />
          </tr>
        ))}
        <tr className="h-5">
          <RowHead n={18} />
          <Cell colSpan={2} w={85}>Provinsi Jambi</Cell>
          {[246, 594, 6128, 3271, 2857, 59, 1696].map((x, j) => <Cell key={j} c={j > 4 ? "bg-[#ffc000]" : ""}>{x}</Cell>)}
          <Blank n={AFTER_J} />
        </tr>
        <tr className="h-5"><RowHead n={19} /><Blank n={COLS.length} /></tr>
        <tr className="h-5"><RowHead n={20} /><Blank n={COLS.length} /></tr>
        <tr className="h-[38px]">
          <RowHead n={21} />
          <Cell colSpan={COLS.length} c="pl-px text-left!" w={301}>Progress Pengentasan Project SLS Salah dan Belum</Cell>
        </tr>
        <tr className="h-5 font-bold">
          <RowHead n={22} />
          <Cell rowSpan={2} w={18}>No</Cell>
          <Cell rowSpan={2} w={101}>Kabupaten/Kota</Cell>
          <Cell colSpan={13} c="bg-[#fabf8f]" w={129}>Jumlah Project Salah</Cell>
          <Cell colSpan={13} w={226}>Jumlah Project Belum (SLS+NONSLS)</Cell>
        </tr>
        <tr className="h-5 font-bold">
          <RowHead n={23} />
          {DATES.map((d) => <Cell key={d} c="bg-[#fabf8f]" w={d.length > 5 ? 45 : 38}>{d}</Cell>)}
          {DATES.map((d) => <Cell key={d} w={d.length > 5 ? 45 : 38}>{d}</Cell>)}
        </tr>
        {SALAH.map((row, i) => (
          <tr key={i} className="h-5">
            <RowHead n={24 + i} />
            <Cell>{i + 1}</Cell>
            <Cell c="pl-[2px] text-left!" w={CELL_W[i]}>{DATA[i][0]}</Cell>
            {DATES.map((d, j) => <Cell key={d} c="bg-[#fabf8f]">{row[j]}</Cell>)}
            {DATES.map((d, j) => <Cell key={d}>{BELUM[i][j]}</Cell>)}
          </tr>
        ))}
        <tr className="h-5">
          <RowHead n={31} last />
          <Cell />
          <Cell c="pt-px pl-[2px] text-left!" w={71}>[1508] Tebo</Cell>
          {DATES.map((d) => <Cell key={d} c="bg-[#fabf8f]" />)}
          {DATES.map((d) => <Cell key={d} />)}
        </tr>
      </tbody>
    </table>
  );
}

/* ------------------------------------------------------------ chart */

const SERIES = [
  { col: 1, color: "#4f81bd", name: "Nama Project Salah", x: 150, w: 94 },
  { col: 2, color: "#c0504d", name: "Anomali Jml Keluarga (>15kk)", x: 283, w: 142 },
  { col: 3, color: "#9bbb59", name: "SLS/NonSLS Belum", x: 465, w: 91 },
  { col: 6, color: "#8064a2", name: "Nama Project Regsosek Khusus Salah", x: 594, w: 179 },
  { col: 7, color: "#4bacc6", name: "ID Wilkerstat Regsosek Khusus Salah", x: 813, w: 175 },
];
const NAME_W = [67, 81, 88, 91, 98, 141, 138, 58, 65, 62, 100];
const X0 = 160;
const PER_UNIT = 0.7992;
const barEdge = (i, j) => Math.round(68.68 + 34.18 * i + 5.26 * j);

function Chart() {
  return (
    <svg width="999" height="488" className="block border border-r-0 border-[#d9d9d9] bg-white font-[Lato] text-[10.700px]">
      <g>
        {[0, 200, 400, 600, 800, 1000].map((v) => {
          const x = Math.round(X0 + v * PER_UNIT);
          return (
            <g key={v}>
              <rect x={x} y="65" width="1" height="376" fill="#d9d9d9" />
              <text x={x + 0.500} y="51" textAnchor="middle" fill="#595959">{v}</text>
            </g>
          );
        })}
        <text x="242" y="27" textLength="673" fill="#595959" className="text-[16.500px]">
          Grafik Anomali Project Wilkerstat Regsosek 2022 BPS Kabupaten/Kota Se Provinsi Jambi
        </text>
        {DATA.map((row, i) => (
          <g key={row[0]}>
            <text x={149 - NAME_W[i]} y={84.3 + 34.18 * i} textLength={NAME_W[i]} fill="#595959">{row[0]}</text>
            {SERIES.map((s, j) => (
              <rect key={s.name} x={X0} y={barEdge(i, j)} width={Math.ceil(row[s.col] * PER_UNIT)} height={barEdge(i, j + 1) - barEdge(i, j)} fill={s.color} />
            ))}
          </g>
        ))}
        {DATA.map((row, i) =>
          SERIES.map((s, j) => (
            <text key={`${i}-${j}`} x={X0 + row[s.col] * PER_UNIT + 8} y={barEdge(i, j) + 6.300} fill="#404040">{row[s.col]}</text>
          ))
        )}
        {SERIES.map((s) => (
          <g key={s.name}>
            <rect x={s.x} y="463" width="7" height="7" fill={s.color} />
            <text x={s.x + 10} y="470" textLength={s.w} fill="#595959">{s.name}</text>
          </g>
        ))}
      </g>
    </svg>
  );
}

/* ------------------------------------------------------------ bottom bars */

const Arrow = ({ rot, className = "" }) => (
  <Svg w={9} h={9} className={`${rot} ${className}`}>
    <path d="M.8 6.500 4.500 2.800l3.700 3.700" stroke="#505050" strokeWidth="2" />
  </Svg>
);

function SheetTabs() {
  return (
    <div className="flex h-[33px] shrink-0 items-start border-b border-[#e1dfdd] bg-[#f4f4f4] text-[14px] leading-[32px] text-[#4a4a4a]">
      <div className="flex h-[32px] w-full items-center">
        <Svg w={6} h={10} className="ml-[13px]"><path d="M5.300.7 1 5l4.300 4.300" stroke="#b5b5b5" strokeWidth="1.200" /></Svg>
        <Svg w={6} h={10} className="ml-[26px]"><path d="M.7.7 5 5 .7 9.300" stroke="#b5b5b5" strokeWidth="1.200" /></Svg>
        <Svg w={13} h={11} className="ml-[23px]"><path d="M0 .5h13M0 5.500h13M0 10.500h13" stroke="#333" strokeWidth="1.100" /></Svg>
        <div className="ml-[18px] h-[32px] w-[42px] border-b-[3px] border-[#217346] pl-[2px] font-semibold text-[#333]">
          <Fit w={38}>Rekap</Fit>
        </div>
        <Fit w={175} className="ml-[29px]">Nama Project disinyalir Salah</Fit>
        <Fit w={158} className="ml-[38px]">Jml_Keluarga_banyakAnet</Fit>
        <div className="mb-[2px] ml-[20px] flex h-[26px] w-[208px] shrink-0 items-center justify-center rounded-[2px] bg-[#ffc000] pt-[2px]">
          <Fit w={179}>ProjectRegsosekKhusus Salah</Fit>
        </div>
        <div className="mb-[2px] ml-[6px] flex h-[26px] w-[217px] shrink-0 items-center justify-center rounded-[2px] bg-[#ffc000] pt-[2px]">
          <Fit w={190}>ID Wilkerstat Reg Khusus Salah</Fit>
        </div>
        <Fit w={129} className="ml-[19px]">SLS belum dieksekusi</Fit>
        <Fit w={83} className="ml-[27px]">CountGeotag</Fit>
        <Fit w={129} className="ml-[26px]">Master SLS Regsosek</Fit>
        <Svg w={11} className="ml-[24px]"><path d="M5.500 0v11M0 5.500h11" stroke="#333" strokeWidth="1.100" /></Svg>
      </div>
    </div>
  );
}

function StatusBar() {
  return (
    <div className="flex h-[22px] shrink-0 items-center bg-white pt-[3px] text-[12px] leading-[18px] text-[#444]">
      <Fit w={156} className="ml-[14px]">Calculation Mode: Automatic</Fit>
      <Fit w={104} className="ml-[18px]">Workbook Statistics</Fit>
      <Chevron w={6} sw={1.800} className="mr-[42px] ml-auto" />
      <Fit w={144} className="mr-[10px]">Give Feedback to Microsoft</Fit>
    </div>
  );
}

const AdobeIcon = ({ label, fg, bg }) => (
  <span className={`flex size-[22px] items-center justify-center border-[1.500px] text-[11.500px] leading-none font-semibold ${fg} ${bg}`}>{label}</span>
);

const OfficeDoc = ({ letter, color, children }) => (
  <Svg w={23} h={23}>
    <rect x="11" y="3" width="11" height="17" fill="#fff" stroke={color} />
    {children}
    <path d="M0 2.500 13 0v23L0 20.500z" fill={color} />
    <text x="6.500" y="16" fontSize="11.500" fontWeight="700" textAnchor="middle" fill="#fff" fontFamily="Open Sans, sans-serif">{letter}</text>
  </Svg>
);

const TASKS = [
  { icon: <AdobeIcon label="Pr" fg="text-[#e085ff] border-[#e085ff]" bg="bg-[#2a0634]" /> },
  {
    icon: (
      <Svg w={22} h={22}>
        <path d="M1 6 17 1l1 3L2 8.500z" fill="#eee" />
        <path d="m4 5 2 2.500M8.500 3.700l2 2.500M13 2.300l2 2.500" stroke="#222" strokeWidth="1.800" />
        <path d="M2 9h18v11.500L3 22z" fill="#f5f5f5" />
        <path d="M2 9h18v2.500H2z" fill="#333" />
        <path d="M4 9l2 2.500M9 9l2 2.500M14 9l2 2.500" stroke="#eee" strokeWidth="1.600" />
        <text x="3.500" y="20.500" fontSize="9.500" fontWeight="700" fontFamily="Open Sans, sans-serif" fill="#e0442c">3</text>
        <text x="9" y="20.500" fontSize="9.500" fontWeight="700" fontFamily="Open Sans, sans-serif" fill="#3a9b46">2</text>
        <text x="14.500" y="20.500" fontSize="9.500" fontWeight="700" fontFamily="Open Sans, sans-serif" fill="#2a6fc9">1</text>
      </Svg>
    ),
  },
  {
    icon: (
      <Svg w={18} h={22}>
        <path d="M0 5 11 0l6.500 2v18L11 22 0 17.500l11 1.300V4L4.500 5.800v9.700L0 17.500z" fill="#dc3e15" />
        <path d="m11 0 6.500 2v9H11z" fill="#ff7a2b" />
        <path d="M11 11h6.500v9L11 22z" fill="#c9211e" />
      </Svg>
    ),
  },
  { icon: <OldExcel s={22} />, run: true, multi: true },
  {
    icon: (
      <Svg w={22} h={20}>
        <path d="M0 1.500h8l2 2.500h12v14H0z" fill="#f9c440" />
        <path d="M0 6h22v12.500H0z" fill="#ffdf7e" />
        <path d="M4 11.500h14V20h-3.500v-4h-7v4H4z" fill="#3a94dd" />
      </Svg>
    ),
    run: true,
  },
  { icon: <FirefoxIcon s={24} />, active: true },
  { icon: <AdobeIcon label="Ps" fg="text-[#26c9ff] border-[#26c9ff]" bg="bg-[#001d33]" /> },
  {
    icon: (
      <Svg w={24} h={24}>
        <rect width="24" height="24" fill="#f04b23" />
        <path d="M5 20.500V7.500C5 5 7.500 3.500 10 5l1.500 7.500C11.500 17 9 20 5 20.500z" fill="#fff" />
        <path d="M13 19.500 11.500 12c0-5 3-8.500 7.500-9v13c0 3.500-3.500 5-6 3.500z" fill="#fff" />
      </Svg>
    ),
  },
  {
    icon: (
      <Svg w={23} h={23}>
        <path d="M7 1.500 22 3l-5 19L1 20z" fill="#8ec7d8" />
        <path d="M7 1.500 18 2.500 9 21 1 20z" fill="#d4eef4" opacity=".6" />
        <path d="m22 3 .5 2L18 22.500l-1-.5z" fill="#c9b06a" />
        <path d="M7 1.500 22 3" stroke="#555" strokeWidth="1.500" strokeDasharray="1.500 1" />
      </Svg>
    ),
    run: true,
  },
  {
    icon: (
      <OfficeDoc letter="W" color="#2b579a">
        <path d="M14 6.500h6M14 9.500h6M14 12.500h6M14 15.500h6" stroke="#2b579a" strokeWidth="1.300" />
      </OfficeDoc>
    ),
    run: true,
    multi: true,
  },
  {
    icon: (
      <OfficeDoc letter="P" color="#d24726">
        <circle cx="17" cy="8" r="2.600" stroke="#d24726" strokeWidth="1.300" />
        <path d="M14 13.500h6M14 16.500h6" stroke="#d24726" strokeWidth="1.300" />
      </OfficeDoc>
    ),
    run: true,
  },
  {
    icon: (
      <span className="relative block">
        <Svg w={23} h={26}>
          <path d="M12 1a11 11 0 1 1-5.500 20.500L1 23.500l1.700-5.500A11 11 0 0 1 12 1z" fill="#fff" />
          <path d="M12 2.700a9.300 9.300 0 1 1-5 17.200l-3.500 1.200 1-3.500A9.300 9.300 0 0 1 12 2.700z" fill="#25b845" />
          <path d="M8 7c-2 3 2.500 9.500 8 9.500l1-2.500-2.500-1.500-1.500 1c-1.500-.5-2.800-2-3.200-3.200l1-1.200L9.500 7z" fill="#fff" />
        </Svg>
        <span className="absolute top-[11px] left-[11px] flex size-[15px] items-center justify-center rounded-full bg-[#ee1111] text-[10px] leading-none tracking-[-0.300px] text-white">13</span>
      </span>
    ),
    run: true,
  },
];

function Taskbar() {
  return (
    <div className="flex h-10 shrink-0 items-center bg-[#2f292d] text-white">
      <Svg w={16} className="ml-[16px]">
        <path d="M0 2.200 6.500 1.300v6.200H0zM7.500 1.200 16 0v7.500H7.500zM0 8.500h6.500v6.200L0 13.800zM7.500 8.500H16V16l-8.500-1.200z" fill="#fff" />
      </Svg>
      <Svg w={17} h={17} className="ml-[32px]">
        <circle cx="10.500" cy="6.500" r="5.500" stroke="#fff" strokeWidth="1.400" />
        <path d="M6.500 10.500.7 16.300" stroke="#fff" strokeWidth="1.400" />
      </Svg>
      <Svg w={17} h={16} className="ml-[31px]">
        <path d="M.7 0v2.700h10.600V0M.7 5.200h10.600v5.600H.7zM.7 16v-2.700h10.600V16M14.800 0v3.500M14.800 8v8" stroke="#fff" strokeWidth="1.200" />
        <rect x="13.500" y="4.500" width="2.700" height="3" fill="#fff" />
      </Svg>
      <div className="ml-[18px] flex h-full">
        {TASKS.map((t, i) => (
          <div key={i} className={`mr-px flex h-full w-[48px] flex-col items-center ${t.active ? "bg-[#5b565a]" : ""}`}>
            <div className="flex h-[38px] items-center">{t.icon}</div>
            <div className={`flex h-[2px] ${t.active ? "w-full bg-[#76b9ed]" : "w-10"} ${t.run ? "bg-[#76b9ed]" : ""}`}>
              {t.multi && <span className="ml-auto w-[8px] bg-[#5685aa]" />}
            </div>
          </div>
        ))}
      </div>
      <Svg w={24} h={19} className="ml-auto">
        <path d="M9 1.500a7 7 0 0 1 7.500 4.800A6.300 6.300 0 0 1 18.500 18H5.500A5 5 0 0 1 3 8.500 6.500 6.500 0 0 1 9 1.500z" fill="#bcd5fb" />
        <path d="M5.500 18A5 5 0 0 1 1 12c4-3 9 1 14-1 4-1.500 7 0 8.700 1.500A6 6 0 0 1 18 18z" fill="#7ea9ee" />
      </Svg>
      <div className="ml-[8px] flex w-[90px] gap-[9px] text-[14px]">
        <Fit w={29}>27°C</Fit>
        <Fit w={52}>Berawan</Fit>
      </div>
      <Chevron w={12} sw={1.100} className="ml-[25px] rotate-180" />
      <Svg w={12} h={18} className="ml-[13px]">
        <path d="M2.500 2.500C5 .5 7 .5 9.500 2.500M2.500 15.500c2.500 2 4.500 2 7 0" stroke="#fff" />
        <rect x="1" y="5" width="7" height="8" rx="1" stroke="#fff" strokeWidth="1.100" />
        <path d="M8 8.500 11 6.500v5L8 9.800" stroke="#fff" />
      </Svg>
      <Svg w={17} h={15} className="ml-[9px]">
        <path d="M5 2.500h11.500v8H5M10 10.500v3M6.500 14h7M.5.500h4.500v5H.5zM2.700 5.500V12h2.500" stroke="#fff" strokeWidth="1.100" />
      </Svg>
      <div className="ml-[9px] flex w-[58px] flex-col items-center text-[12px] leading-[18px]">
        <Fit w={27}>10:20</Fit>
        <Fit w={58}>10/11/2022</Fit>
      </div>
      <div className="relative ml-[18px] w-[36px]">
        <Svg w={17} h={17}>
          <path d="M0 0h16v12H8l-4 4v-4H0z" fill="#fff" />
          <path d="M3 3h10M3 6h10M3 9h6" stroke="#2f292d" strokeWidth="1.200" />
        </Svg>
        <span className="absolute top-[6px] left-[7px] flex size-[17px] items-center justify-center rounded-full border border-[#8a8689] bg-[#2f292d] text-[11px] leading-none font-semibold">9</span>
      </div>
      <span className="mr-[4px] h-full w-px bg-[#6b676a]" />
    </div>
  );
}

export default function App() {
  return (
    <div className="flex h-[1080px] w-[1920px] flex-col overflow-hidden bg-white font-['Open_Sans',sans-serif]">
      <TabStrip />
      <NavBar />
      <ExcelHeader />
      <div className="flex h-[79px] shrink-0 flex-col bg-gradient-to-b from-[#f3f2f1] from-[76px] to-[#e4e3e2]">
        <MenuRow />
        <ToolRow />
      </div>
      <FormulaBar />
      <div className="flex h-[723px] shrink-0">
        <div className="relative w-[1903px] overflow-hidden">
          <Sheet />
          <div className="absolute top-[37px] left-[904px] w-[999px]"><Chart /></div>
          <div className="absolute top-[17px] left-[797px] h-[23px] w-[80px] border-2 border-[#217346]">
            <span className="absolute -right-[3px] -bottom-[3px] size-[5px] border-t border-l border-white bg-[#217346]" />
          </div>
        </div>
        <div className="flex w-[17px] flex-col items-center bg-[#f0f0f0]">
          <div className="h-[19px] w-full bg-[#f4f4f4]" />
          <div className="flex h-[17px] items-center"><Arrow /></div>
          <div className="h-[375px] w-full shrink-0 bg-[#cdcdcd]" />
          <div className="mt-auto flex h-[17px] items-center"><Arrow rot="rotate-180" /></div>
        </div>
      </div>
      <div className="flex h-[17px] shrink-0 items-center bg-[#f0f0f0]">
        <div className="h-full w-[37px] bg-[#f4f4f4]" />
        <div className="flex w-[17px] justify-center"><Arrow rot="-rotate-90" /></div>
        <div className="h-full w-[733px] bg-[#cdcdcd]" />
        <Arrow rot="rotate-90" className="mr-[20px] ml-auto" />
      </div>
      <SheetTabs />
      <StatusBar />
      <Taskbar />
    </div>
  );
}
